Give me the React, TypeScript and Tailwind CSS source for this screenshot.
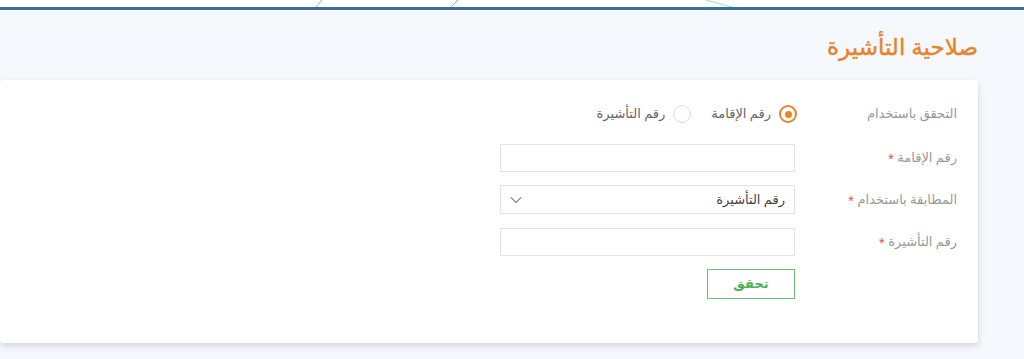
import { ChevronDown } from 'lucide-react';

const font = { fontFamily: '"Noto Sans", "DejaVu Sans", sans-serif' };

function Req({ children }: { children: string }) {
  return (
    <span>
      {children} <span className="text-[11px] text-[#d9534f]">*</span>
    </span>
  );
}

function Radio({ checked, label }: { checked?: boolean; label: string }) {
  return (
    <label className="flex items-center gap-2 text-[13px] text-[#666]">
      <span
        className={
          checked
            ? 'flex h-[18px] w-[18px] items-center justify-center rounded-full border-2 border-[#e6842a]'
            : 'flex h-[18px] w-[18px] items-center justify-center rounded-full border border-[#ddd]'
        }
      >
        {checked && <span className="h-[7px] w-[7px] rounded-full bg-[#e6842a]" />}
      </span>
      {label}
    </label>
  );
}

export default function App() {
  return (
    <div dir="rtl" className="min-h-screen bg-[#f5f8fc]" style={font}>
      {/* header strip */}
      <div className="relative h-[7px] bg-white">
        <svg className="absolute inset-0" width="1024" height="7" viewBox="0 0 1024 7">
          <line x1="322" y1="0" x2="316" y2="7" stroke="#8a9aa8" strokeWidth="0.8" />
          <line x1="458" y1="0" x2="451" y2="7" stroke="#8a9aa8" strokeWidth="0.8" />
          <line x1="706" y1="0" x2="732" y2="7" stroke="#9fd8e0" strokeWidth="1" />
        </svg>
      </div>
      <div className="h-[3px] bg-[#3b6d9b]" />

      <h1
        className="mr-[46px] pt-[18px] pb-[16px] text-[23px] font-normal leading-[36px] text-[#e6842a]"
        style={{ WebkitTextStroke: '0.4px #e6842a' }}
      >
        صلاحية التأشيرة
      </h1>

      <div className="mr-[46px] rounded-sm bg-white pb-[44px] pt-[20px] pr-[21px] shadow-[0_3px_7px_rgba(0,0,0,0.14)]">
        <div className="grid grid-cols-[162px_295px] text-[13px]">
          <div className="flex h-[28px] items-center text-[#999]">التحقق باستخدام</div>
          <div className="-mr-[2px] flex h-[28px] items-center gap-[20px]">
            <Radio checked label="رقم الإقامة" />
            <Radio label="رقم التأشيرة" />
          </div>

          <div className="mt-[16px] flex h-[28px] items-center text-[#999]">
            <Req>رقم الإقامة</Req>
          </div>
          <input className="mt-[16px] h-[28px] border border-[#e3e3e3] bg-white px-2 outline-none" />

          <div className="mt-[13px] flex h-[29px] items-center text-[#999]">
            <Req>المطابقة باستخدام</Req>
          </div>
          <div className="mt-[13px] flex h-[29px] items-center justify-between border border-[#e3e3e3] bg-white pr-[9px] pl-[5px] text-[#444]">
            <span>رقم التأشيرة</span>
            <ChevronDown className="h-[20px] w-[20px] text-[#888]" strokeWidth={1.3} />
          </div>

          <div className="mt-[14px] flex h-[28px] items-center text-[#999]">
            <Req>رقم التأشيرة</Req>
          </div>
          <input className="mt-[14px] h-[28px] border border-[#e3e3e3] bg-white px-2 outline-none" />

          <div />
          <div className="mt-[13px]">
            <button className="h-[30px] w-[88px] border border-[#6cbf6c] bg-white text-[13px] font-bold text-[#4caf50]">
              تحقق
            </button>
          </div>
        </div>
      </div>
    </div>
  );
}
